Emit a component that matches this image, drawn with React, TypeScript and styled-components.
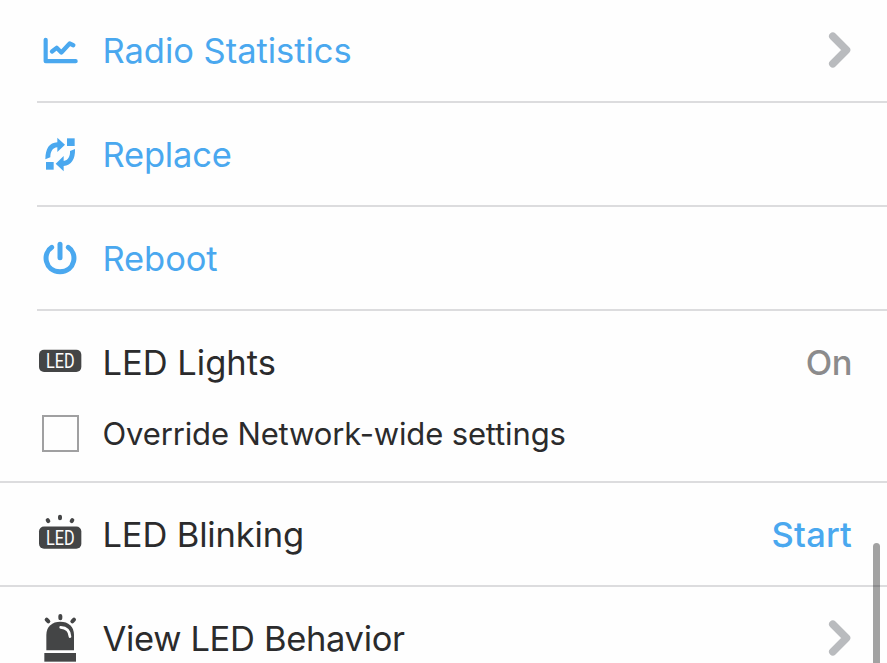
import React from "react";
import styled, { createGlobalStyle } from "styled-components";

const GlobalStyle = createGlobalStyle`
  * { box-sizing: border-box; }
  body { margin: 0; background: #fefefe; overflow: hidden; }
`;

const BLUE = "#4aa8ef";
const DARK = "#444546";

const Screen = styled.main`
  position: relative;
  width: 887px;
  height: 663px;
  overflow: hidden;
  background: #fefefe;
  font-family: Inter, "Liberation Sans", sans-serif;
`;

const List = styled.div`
  display: flex;
  flex-direction: column;
`;

const Row = styled.div<{ $height?: number; $top?: number; $bottom?: number }>`
  display: flex;
  flex: none;
  align-items: center;
  height: ${(p) => p.$height ?? 102}px;
  padding: ${(p) => p.$top ?? 2}px 35px ${(p) => p.$bottom ?? 0}px 30px;
`;

const Divider = styled.div<{ $inset?: boolean }>`
  flex: none;
  height: 2px;
  margin-left: ${(p) => (p.$inset ? 37 : 0)}px;
  background: #dcdcde;
`;

const IconBox = styled.svg<{ $tone: string; $lift?: number }>`
  flex: none;
  display: block;
  width: 60px;
  transform: translateY(-${(p) => p.$lift ?? 0}px);
  color: ${(p) => p.$tone};
`;

const Label = styled.span<{ $tone?: string; $size?: number; $track?: number }>`
  flex: 1;
  margin-left: 12.5px;
  white-space: nowrap;
  line-height: 44px;
  font-size: ${(p) => p.$size ?? 34.5}px;
  letter-spacing: ${(p) => p.$track ?? 0}px;
  color: ${(p) => p.$tone ?? "#2b2b2c"};
`;

const Value = styled.span<{ $tone: string; $track?: number }>`
  white-space: nowrap;
  line-height: 44px;
  font-size: 34.5px;
  font-weight: 500;
  letter-spacing: ${(p) => p.$track ?? 0}px;
  color: ${(p) => p.$tone};
`;

const CheckCell = styled.div`
  flex: none;
  width: 60px;
  padding-left: 12px;
`;

const Checkbox = styled.div`
  width: 37px;
  height: 37px;
  border: 2px solid #a0a0a1;
`;

const ScrollThumb = styled.div`
  position: absolute;
  left: 873px;
  top: 543px;
  width: 7px;
  height: 140px;
  border-radius: 4px;
  background: rgba(0, 0, 0, 0.36);
`;

const ChartIcon = () => (
  <IconBox $tone={BLUE} $lift={0.5} viewBox="0 0 180 150" height="50">
    <g fill="none" stroke="currentColor" strokeLinecap="round" strokeLinejoin="round">
      <path d="M47 43V107H137" strokeWidth="12.5" />
      <path d="M66 78L80 67L94 81L119 54L130 59" strokeWidth="13" />
    </g>
  </IconBox>
);

const ReplaceIcon = () => (
  <IconBox $tone={BLUE} viewBox="0 0 180 150" height="50">
    <g fill="currentColor">
      <rect x="111" y="25" width="23" height="23" />
      <rect x="48" y="96" width="23" height="23" />
      <path d="M46 88C46 56 58 38 82 37V23L105 44L82 66V52C68 53 61 65 61 82Z" />
      <path d="M135 57C136 88 124 106 101 108V124L77 101L101 78V93C114 91 121 79 120 63Z" />
    </g>
  </IconBox>
);

const PowerIcon = () => (
  <IconBox $tone={BLUE} viewBox="0 0 180 150" height="50">
    <g fill="none" stroke="currentColor" strokeLinecap="round">
      <path d="M65 40C37 57 43 112 90 113C137 112 143 57 115 40" strokeWidth="15" />
      <path d="M90 31V71" strokeWidth="15" />
    </g>
  </IconBox>
);

const LedText = ({ y }: { y: number }) => (
  <text
    x="91"
    y={y}
    textAnchor="middle"
    textLength="86"
    lengthAdjust="spacingAndGlyphs"
    fontFamily="Roboto, sans-serif"
    fontWeight="400"
    fontSize="58"
    fill="#fefefe"
  >
    LED
  </text>
);

const LedIcon = () => (
  <IconBox $tone={DARK} $lift={3} viewBox="0 0 180 150" height="50">
    <rect x="27" y="44" width="127" height="67" rx="15" fill="currentColor" />
    <LedText y={99} />
  </IconBox>
);

const BlinkIcon = () => (
  <IconBox $tone={DARK} $lift={2.5} viewBox="0 0 180 165" height="55">
    <g stroke="currentColor" strokeWidth="12" strokeLinecap="round">
      <path d="M90 34V38M53 44L55 47M127 44L125 47" />
    </g>
    <rect x="27" y="63" width="127" height="67" rx="15" fill="currentColor" />
    <LedText y={117} />
  </IconBox>
);

const BeaconIcon = () => (
  <IconBox $tone={DARK} $lift={5} viewBox="0 0 180 174" height="58">
    <g stroke="currentColor" strokeWidth="12" strokeLinecap="round" fill="none">
      <path d="M91 33V40M50 44L55 49M132 44L127 49" />
    </g>
    <path d="M49 136V90C49 64 67 50 91 50S132 64 132 90V136Z" fill="currentColor" />
    <path d="M92 67C110 68 119 78 120 95" fill="none" stroke="#fefefe" strokeWidth="8" strokeLinecap="round" />
    <rect x="43" y="144" width="95" height="26" fill="currentColor" />
  </IconBox>
);

const ChevronSvg = styled.svg`
  flex: none;
  display: block;
  width: 24px;
  height: 36px;
  transform: translateY(-1px);
  color: #b9bbbe;
`;

const Chevron = () => (
  <ChevronSvg viewBox="0 0 24 36">
    <path
      d="M4.8 4.3L18.5 18L4.8 31.7"
      fill="none"
      stroke="currentColor"
      strokeWidth="7.6"
      strokeLinecap="round"
      strokeLinejoin="round"
    />
  </ChevronSvg>
);

export default function App() {
  return (
    <Screen>
      <GlobalStyle />
      <List>
        <Row $height={101} $top={0}>
          <ChartIcon />
          <Label $tone={BLUE} $track={-0.03}>Radio Statistics</Label>
          <Chevron />
        </Row>
        <Divider $inset />
        <Row>
          <ReplaceIcon />
          <Label $tone={BLUE} $track={-0.2}>Replace</Label>
        </Row>
        <Divider $inset />
        <Row>
          <PowerIcon />
          <Label $tone={BLUE} $track={-0.1}>Reboot</Label>
        </Row>
        <Divider $inset />
        <Row>
          <LedIcon />
          <Label>LED Lights</Label>
          <Value $tone="#8b8b8c" $track={-0.5}>On</Value>
        </Row>
        <Row $height={68} $top={0} $bottom={27}>
          <CheckCell>
            <Checkbox role="checkbox" aria-checked="false" />
          </CheckCell>
          <Label $size={31} $track={-0.14}>Override Network-wide settings</Label>
        </Row>
        <Divider />
        <Row>
          <BlinkIcon />
          <Label $track={-0.15}>LED Blinking</Label>
          <Value $tone={BLUE} $track={0.2}>Start</Value>
        </Row>
        <Divider />
        <Row>
          <BeaconIcon />
          <Label $track={-0.33}>View LED Behavior</Label>
          <Chevron />
        </Row>
      </List>
      <ScrollThumb />
    </Screen>
  );
}
